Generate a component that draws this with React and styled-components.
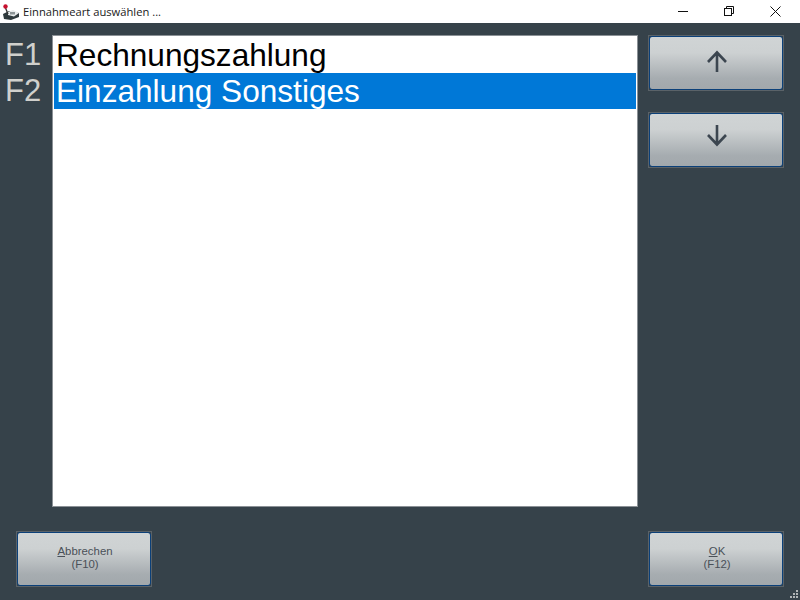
import styled, { createGlobalStyle } from "styled-components";

const Global = createGlobalStyle`
	html, body {
		margin: 0;
		padding: 0;
		background: #36424a;
		font-family: "Liberation Sans", Arial, sans-serif;
	}
`;

const Window = styled.div`
	position: relative;
	display: flex;
	flex-direction: column;
	width: 800px;
	height: 600px;
	overflow: hidden;
	background: #36424a;
`;

const TitleBar = styled.div`
	display: flex;
	align-items: center;
	height: 23px;
	background: #fff;
	flex: none;
`;

const AppIcon = styled.svg`
	width: 18px;
	height: 18px;
	margin-left: 2px;
	flex: none;
`;

const Title = styled.div`
	margin-left: 3px;
	font-family: "Open Sans", "Noto Sans", sans-serif;
	font-size: 11.2px;
	color: #1a1a1a;
	white-space: nowrap;
`;

const WindowControls = styled.div`
	display: flex;
	margin-left: auto;
	padding-right: 2px;
`;

const ControlButton = styled.div`
	display: flex;
	align-items: center;
	justify-content: center;
	width: 46px;
	height: 21px;
`;

const Main = styled.div`
	display: flex;
	height: 472px;
	margin-top: 12px;
	flex: none;
`;

const KeyColumn = styled.div`
	display: flex;
	flex-direction: column;
	width: 52px;
	padding: 1px 0 0 5px;
	box-sizing: border-box;
	flex: none;
`;

const KeyLabel = styled.div`
	height: 36px;
	line-height: 37px;
	font-size: 31px;
	color: #d0d0cc;
`;

const List = styled.div`
	width: 586px;
	box-sizing: border-box;
	padding: 1px 1px 0 1px;
	background: #fff;
	border: 1px solid #8b9196;
	flex: none;
`;

const Row = styled.div`
	height: 36px;
	line-height: 36px;
	padding-left: 2px;
	font-size: 31.6px;
	white-space: nowrap;
	background: ${(p) => (p.$selected ? "#0078d7" : "#fff")};
	color: ${(p) => (p.$selected ? "#fff" : "#000")};
`;

const SideColumn = styled.div`
	display: flex;
	flex-direction: column;
	gap: 21px;
	margin-left: 10px;
`;

const Footer = styled.div`
	display: flex;
	justify-content: space-between;
	padding: 24px 16px 0 16px;
`;

const Button = styled.button`
	display: flex;
	width: 136px;
	height: 56px;
	padding: 0;
	box-sizing: border-box;
	border: 1px solid #5a6268;
	background: #36424a;
	font-family: "Liberation Sans", Arial, sans-serif;
	font-size: 11.4px;
	line-height: 13px;
	color: #4a5058;
`;

const ButtonFace = styled.span`
	display: flex;
	flex-direction: column;
	align-items: center;
	justify-content: center;
	flex: 1;
	padding-bottom: 2px;
	border: 1px solid #0b4079;
	border-radius: 3px;
	background: linear-gradient(#d0d4d5 0%, #cdd1d2 30%, #a6acb0 80%, #a2a8ac 100%);
`;

const Caption = styled.span`
	padding-left: 2px;
`;

const ArrowIcon = styled.svg`
	width: 32px;
	height: 32px;
	margin-bottom: -2px;
`;

const Mnemonic = styled.span`
	text-decoration: underline;
`;

const Grip = styled.svg`
	position: absolute;
	right: 1px;
	bottom: 1px;
	width: 12px;
	height: 12px;
`;

function App() {
	return (
		<Window>
			<Global />
			<TitleBar>
				<AppIcon viewBox="0 0 18 18">
					<path d="M1 11L7 8L17 10V14L9 17L2 16Z" fill="#2f3a3d" />
					<path d="M6 9L11 7L17 10L12 13.5L6 12Z" fill="#e9ecec" />
					<rect x="8" y="9" width="5" height="2.5" fill="#8c9496" />
					<line x1="3.5" y1="5" x2="6" y2="11" stroke="#333" strokeWidth="1.3" />
					<circle cx="3.5" cy="3.5" r="2.2" fill="#c8102e" />
				</AppIcon>
				<Title>Einnahmeart auswählen ...</Title>
				<WindowControls>
					<ControlButton>
						<svg width="11" height="11" viewBox="0 0 11 11">
							<line x1="0" y1="5.5" x2="10" y2="5.5" stroke="#111" />
						</svg>
					</ControlButton>
					<ControlButton>
						<svg width="11" height="11" viewBox="0 0 11 11" fill="none" stroke="#111">
							<rect x="0.5" y="2.5" width="7" height="7" />
							<path d="M2.5 2.5V0.5H9.5V7.5H7.5" />
						</svg>
					</ControlButton>
					<ControlButton>
						<svg width="11" height="11" viewBox="0 0 11 11" stroke="#111">
							<line x1="0.5" y1="0.5" x2="10.5" y2="10.5" />
							<line x1="10.5" y1="0.5" x2="0.5" y2="10.5" />
						</svg>
					</ControlButton>
				</WindowControls>
			</TitleBar>
			<Main>
				<KeyColumn>
					<KeyLabel>F1</KeyLabel>
					<KeyLabel>F2</KeyLabel>
				</KeyColumn>
				<List>
					<Row>Rechnungszahlung</Row>
					<Row $selected>Einzahlung Sonstiges</Row>
				</List>
				<SideColumn>
					<Button>
						<ButtonFace>
							<ArrowIcon viewBox="0 0 32 32" fill="none" stroke="#3c4650" strokeWidth="2.6">
								<path d="M17 25V5M8 15L17 5.5L26 15" />
							</ArrowIcon>
						</ButtonFace>
					</Button>
					<Button>
						<ButtonFace>
							<ArrowIcon viewBox="0 0 32 32" fill="none" stroke="#3c4650" strokeWidth="2.6">
								<path d="M17 1V21M8 11L17 20.5L26 11" />
							</ArrowIcon>
						</ButtonFace>
					</Button>
				</SideColumn>
			</Main>
			<Footer>
				<Button>
					<ButtonFace>
						<Caption>
							<Mnemonic>A</Mnemonic>bbrechen
						</Caption>
						<Caption>(F10)</Caption>
					</ButtonFace>
				</Button>
				<Button>
					<ButtonFace>
						<Caption>
							<Mnemonic>O</Mnemonic>K
						</Caption>
						<Caption>(F12)</Caption>
					</ButtonFace>
				</Button>
			</Footer>
			<Grip viewBox="0 0 12 12" fill="#b0b4b6">
				<rect x="9" y="3" width="2" height="2" />
				<rect x="6" y="6" width="2" height="2" />
				<rect x="9" y="6" width="2" height="2" />
				<rect x="3" y="9" width="2" height="2" />
				<rect x="6" y="9" width="2" height="2" />
				<rect x="9" y="9" width="2" height="2" />
			</Grip>
		</Window>
	);
}

export default App;
